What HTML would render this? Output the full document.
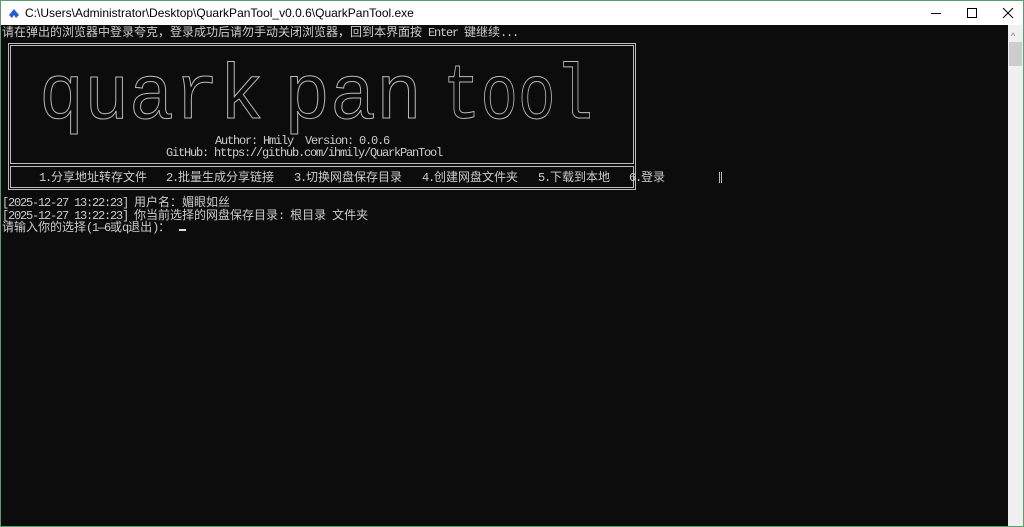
<!DOCTYPE html>
<html><head><meta charset="utf-8"><style>
html,body{margin:0;padding:0;width:1024px;height:527px;overflow:hidden;background:#fff;}
.win{position:absolute;left:0;top:0;width:1022px;height:525px;border:1px solid #5a9e6f;background:#fff;}
.title{position:absolute;left:0;top:0;width:1022px;height:24px;background:#fff;font:12px "Liberation Sans",sans-serif;color:#000;}
.title .t{position:absolute;left:24px;top:5px;}
.con{position:absolute;left:0;top:24px;width:1007px;height:501px;background:#0c0c0c;overflow:hidden;}
.sb{position:absolute;left:1007px;top:24px;width:15px;height:501px;background:#f0f0f0;}
.tx{position:absolute;font:12px "Liberation Mono",monospace;letter-spacing:-1.2px;color:#cccccc;white-space:pre;line-height:12.5px;}
.tx b{font-weight:normal;font-family:"Noto Sans CJK SC",sans-serif;letter-spacing:0;}
</style></head><body>
<div class="win">
<div class="title">
<svg style="position:absolute;left:7px;top:6px" width="12" height="12" viewBox="0 0 12 12"><path d="M1 8 L6 2 L11 8 L8 11 L6 8 L4 11 Z" fill="#2a5bd7"/></svg>
<span class="t">C:\Users\Administrator\Desktop\QuarkPanTool_v0.0.6\QuarkPanTool.exe</span>
<svg style="position:absolute;left:925px;top:6px" width="90" height="12"><line x1="5" y1="6.5" x2="15" y2="6.5" stroke="#000"/><rect x="41.5" y="1.5" width="9" height="9" fill="none" stroke="#000"/><path d="M77 1 L87 11 M87 1 L77 11" stroke="#000"/></svg>
</div>
<div class="con">
<div class="tx" style="left:1px;top:1px"><b>请在弹出的浏览器中登录夸克，登录成功后请勿手动关闭浏览器，回到本界面按</b> Enter <b>键继续</b>...</div>
<svg style="position:absolute;left:0;top:0" width="1007" height="200">
<g fill="none" stroke="#bbb" stroke-width="1">
<rect x="7.5" y="18.5" width="627" height="146"/>
<rect x="9.5" y="20.5" width="623" height="118"/>
<rect x="9.5" y="141.5" width="623" height="21"/>
<line x1="718.5" y1="147" x2="718.5" y2="158"/>
<line x1="720.5" y1="147" x2="720.5" y2="158"/>
</g>
<text x="38" y="93" font-family="Liberation Mono,monospace" font-size="78" fill="none" stroke="#bbb" stroke-width="1" textLength="225" lengthAdjust="spacingAndGlyphs">quark</text>
<text x="283" y="93" font-family="Liberation Mono,monospace" font-size="78" fill="none" stroke="#bbb" stroke-width="1" textLength="138" lengthAdjust="spacingAndGlyphs">pan</text>
<text x="442" y="93" font-family="Liberation Mono,monospace" font-size="78" fill="none" stroke="#bbb" stroke-width="1" textLength="150" lengthAdjust="spacingAndGlyphs">tool</text>
</svg>
<div class="tx" style="left:214px;top:110px">Author: Hmily  Version: 0.0.6</div>
<div class="tx" style="left:165px;top:122px">GitHub: https://github.com/ihmily/QuarkPanTool</div>
<div class="tx" style="left:38px;top:146px">1.<b>分享地址转存文件</b></div>
<div class="tx" style="left:165px;top:146px">2.<b>批量生成分享链接</b></div>
<div class="tx" style="left:293px;top:146px">3.<b>切换网盘保存目录</b></div>
<div class="tx" style="left:421px;top:146px">4.<b>创建网盘文件夹</b></div>
<div class="tx" style="left:537px;top:146px">5.<b>下载到本地</b></div>
<div class="tx" style="left:628px;top:146px">6.<b>登录</b></div>
<div class="tx" style="left:1px;top:171px">[2025-12-27 13:22:23] <b>用户名：媚眼如丝</b></div>
<div class="tx" style="left:1px;top:183.5px">[2025-12-27 13:22:23] <b>你当前选择的网盘保存目录</b>: <b>根目录</b> <b>文件夹</b></div>
<div class="tx" style="left:1px;top:196px"><b>请输入你的选择</b>(1—6<b>或</b>q<b>退出</b>)<b>：</b></div>
<div style="position:absolute;left:178px;top:204px;width:7px;height:2px;background:#ddd"></div>
</div>
<div class="sb"><div style="position:absolute;left:3px;top:6px;font:9px sans-serif;color:#777">^</div><div style="position:absolute;left:1px;top:17px;width:13px;height:24px;background:#cdcdcd"></div></div>
</div>
</body></html>
